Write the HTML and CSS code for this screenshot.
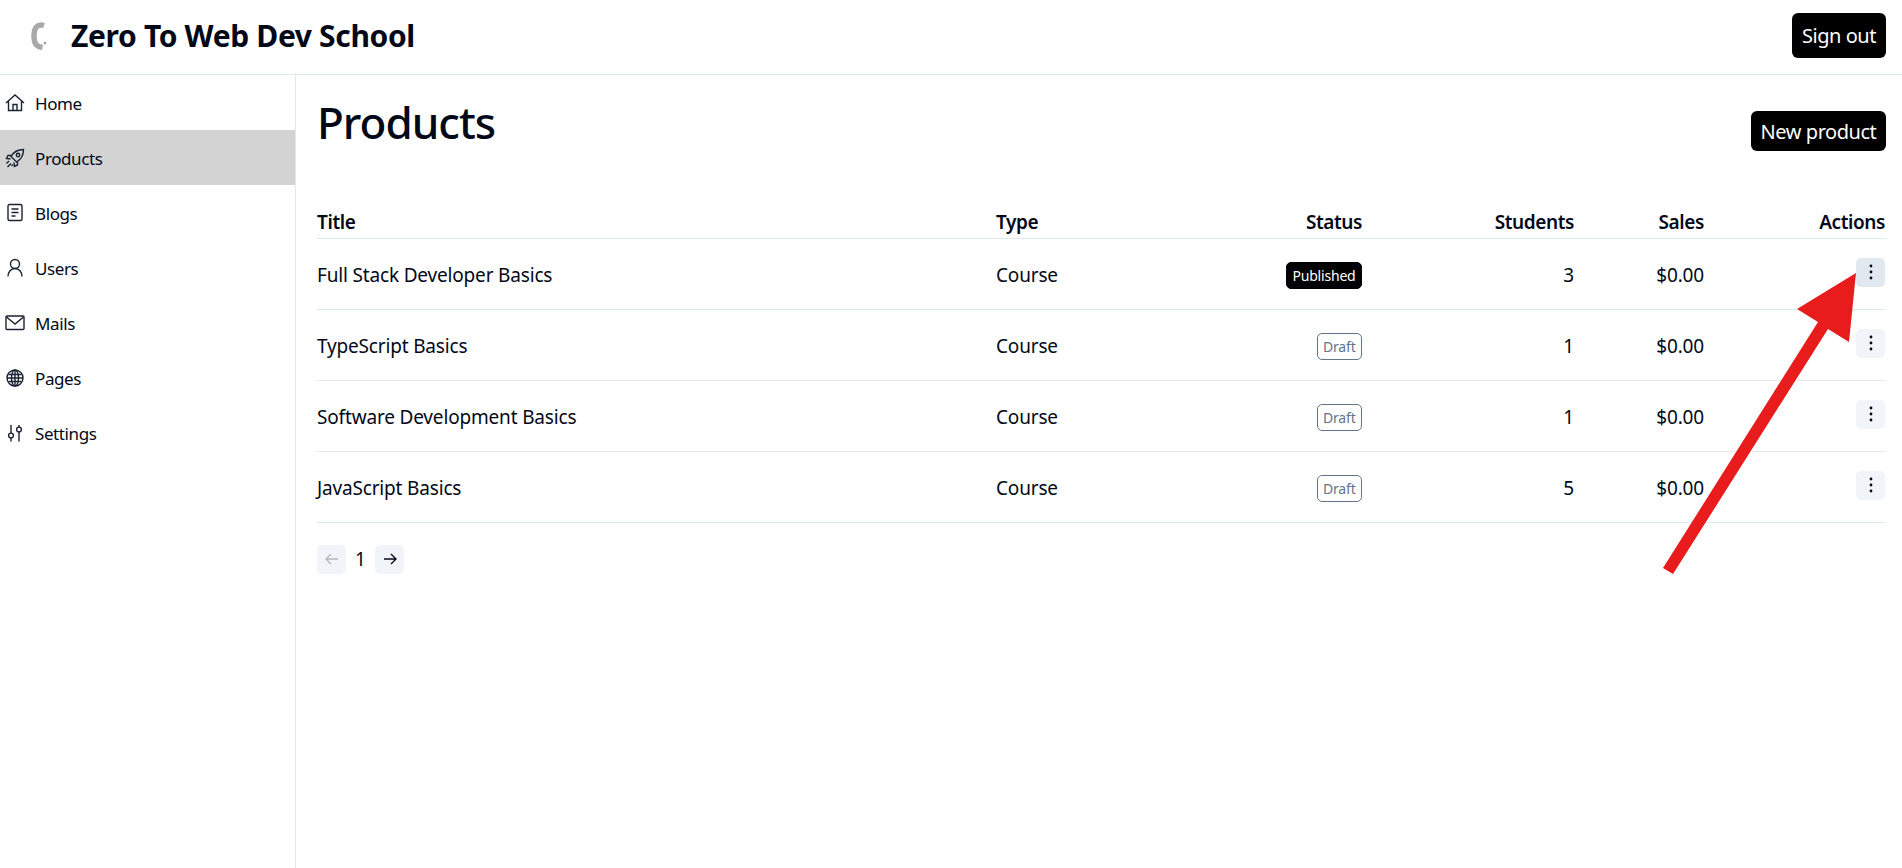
FILE: index.html
```html
<!DOCTYPE html>
<html lang="en">
<head>
    <meta charset="UTF-8">
    <meta name="viewport" content="width=device-width, initial-scale=1.0">
    <title>Products</title>
    <link rel="stylesheet" href="styles.css">
</head>
<body>
    <header class="topbar">
        <div class="brand">
            <svg class="logo" viewBox="0 0 18 28" width="18" height="28"><path d="M14 3.500C8 1.500 4 5 4 14s3 10.500 8.500 11.500" fill="none" stroke="#a9a9a9" stroke-width="5.500"/><circle cx="15" cy="21" r="1.500" fill="#a9a9a9"/></svg>
            <span class="brand-name">Zero To Web Dev School</span>
        </div>
        <button class="btn signout">Sign out</button>
    </header>

    <div class="layout">
        <nav class="sidebar">
            <a class="nav-item">
                <svg class="nav-icon" viewBox="0 0 20 20"><path d="M1 10 10 2l9 8M3.500 8v9.500h13V8M8 17.500v-6h4v6"/></svg>
                Home
            </a>
            <a class="nav-item active">
                <svg class="nav-icon" viewBox="0 0 20 20"><path d="M18.500 1.500C13 1.500 8.500 4 6 8.500l5.500 5.500c4.500-2.500 7-7 7-12.500z"/><circle cx="13" cy="7" r="1.700"/><path d="M6.500 7.500H3l-1.500 3 4 .5M12.500 13.500V17l-3 1.500-.5-4M4 13l-2.500 2.500M6 15.500 2.500 19M8 16.500 6.500 18"/></svg>
                Products
            </a>
            <a class="nav-item">
                <svg class="nav-icon" viewBox="0 0 20 20"><rect x="3" y="1.500" width="14" height="16" rx="1.500"/><path d="M6.500 6h7M6.500 9.500h7M6.500 13h4"/></svg>
                Blogs
            </a>
            <a class="nav-item">
                <svg class="nav-icon" viewBox="0 0 20 20"><circle cx="10" cy="6" r="4.500"/><path d="M3 18.500c0-4.500 3-8 7-8s7 3.500 7 8"/></svg>
                Users
            </a>
            <a class="nav-item">
                <svg class="nav-icon" viewBox="0 0 20 20"><rect x="1" y="3" width="18" height="13.500" rx="1"/><path d="M1.500 4 10 11l8.500-7"/></svg>
                Mails
            </a>
            <a class="nav-item">
                <svg class="nav-icon" viewBox="0 0 20 20"><circle cx="10" cy="10" r="8"/><ellipse cx="10" cy="10" rx="3.500" ry="8"/><path d="M10 2v16M2 10h16M3.500 6.500h13M3.500 13.500h13"/></svg>
                Pages
            </a>
            <a class="nav-item">
                <svg class="nav-icon" viewBox="0 0 20 20"><path d="M6 2v8M6 15v3.500M14 2v2M14 9v9.500"/><circle cx="6" cy="12.500" r="2.400"/><circle cx="14" cy="6.500" r="2.400"/></svg>
                Settings
            </a>
        </nav>

        <main class="content">
            <div class="page-head">
                <h1>Products</h1>
                <button class="btn new-product">New product</button>
            </div>

            <table class="products">
                <colgroup>
                    <col class="col-title"><col class="col-type"><col class="col-status"><col class="col-students"><col class="col-sales"><col>
                </colgroup>
                <thead>
                    <tr>
                        <th>Title</th>
                        <th>Type</th>
                        <th class="right">Status</th>
                        <th class="right">Students</th>
                        <th class="right">Sales</th>
                        <th class="right">Actions</th>
                    </tr>
                </thead>
                <tbody>
                    <tr>
                        <td>Full Stack Developer Basics</td>
                        <td>Course</td>
                        <td class="right"><span class="badge published">Published</span></td>
                        <td class="right">3</td>
                        <td class="right">$0.00</td>
                        <td class="right"><button class="kebab hovered"><svg viewBox="0 0 16 16"><circle cx="8" cy="2" r="1.400"/><circle cx="8" cy="8" r="1.400"/><circle cx="8" cy="14" r="1.400"/></svg></button></td>
                    </tr>
                    <tr>
                        <td>TypeScript Basics</td>
                        <td>Course</td>
                        <td class="right"><span class="badge draft">Draft</span></td>
                        <td class="right">1</td>
                        <td class="right">$0.00</td>
                        <td class="right"><button class="kebab"><svg viewBox="0 0 16 16"><circle cx="8" cy="2" r="1.400"/><circle cx="8" cy="8" r="1.400"/><circle cx="8" cy="14" r="1.400"/></svg></button></td>
                    </tr>
                    <tr>
                        <td>Software Development Basics</td>
                        <td>Course</td>
                        <td class="right"><span class="badge draft">Draft</span></td>
                        <td class="right">1</td>
                        <td class="right">$0.00</td>
                        <td class="right"><button class="kebab"><svg viewBox="0 0 16 16"><circle cx="8" cy="2" r="1.400"/><circle cx="8" cy="8" r="1.400"/><circle cx="8" cy="14" r="1.400"/></svg></button></td>
                    </tr>
                    <tr>
                        <td>JavaScript Basics</td>
                        <td>Course</td>
                        <td class="right"><span class="badge draft">Draft</span></td>
                        <td class="right">5</td>
                        <td class="right">$0.00</td>
                        <td class="right"><button class="kebab"><svg viewBox="0 0 16 16"><circle cx="8" cy="2" r="1.400"/><circle cx="8" cy="8" r="1.400"/><circle cx="8" cy="14" r="1.400"/></svg></button></td>
                    </tr>
                </tbody>
            </table>

            <div class="pager">
                <button class="page-btn disabled"><svg viewBox="0 0 16 16"><path d="M14 8H2M7 3 2 8l5 5"/></svg></button>
                <span class="page-num">1</span>
                <button class="page-btn"><svg viewBox="0 0 16 16"><path d="M2 8h12M9 3l5 5-5 5"/></svg></button>
            </div>
        </main>
    </div>

    <!-- annotation drawn over the screenshot -->
    <svg class="arrow" width="1902" height="868" viewBox="0 0 1902 868"><polygon points="1856,273 1849,342 1828,329 1673,574 1663,568 1818,322 1797,309" fill="#e81c1c"/></svg>
</body>
</html>
```

FILE: styles.css
```css
* {
    box-sizing: border-box;
}
html, body {
    height: 100%;
}
body {
    margin: 0;
    font-family: "Noto Sans", Arial, sans-serif;
    font-size: 19px;
    color: #020817;
    background: #fff;
    overflow: hidden;
}
.topbar {
    height: 75px;
    display: flex;
    align-items: center;
    justify-content: space-between;
    padding: 0 16px 3px 30px;
    border-bottom: 1px solid #e2e8f0;
}
.brand {
    display: flex;
    align-items: center;
    gap: 23px;
}
.brand-name {
    font-size: 30px;
    font-weight: 700;
    letter-spacing: -0.35px;
}
.btn {
    background: #000;
    color: #fff;
    border: none;
    border-radius: 6px;
    font-family: inherit;
    font-size: 20px;
    letter-spacing: -0.45px;
}
.signout {
    height: 45px;
    width: 94px;
}
.new-product {
    height: 40px;
    width: 135px;
}
.layout {
    display: flex;
    height: calc(100% - 75px);
}
.sidebar {
    width: 296px;
    flex-shrink: 0;
    border-right: 1px solid #e2e8f0;
}
.nav-item {
    display: flex;
    align-items: center;
    gap: 10px;
    height: 55px;
    padding: 1px 0 0 5px;
    font-size: 17px;
    letter-spacing: -0.4px;
}
.active {
    background: #d3d3d3;
}
.nav-icon {
    width: 20px;
    height: 20px;
    fill: none;
    stroke: #1a2233;
    stroke-width: 1.4;
    flex-shrink: 0;
}
.content {
    flex: 1;
    padding: 0 16px 0 21px;
}
.page-head {
    display: flex;
    justify-content: space-between;
    align-items: flex-start;
    height: 127px;
}
h1 {
    margin: 17px 0 0;
    font-size: 44px;
    font-weight: 500;
    line-height: 60px;
    letter-spacing: -1px;
}
.new-product {
    margin-top: 36px;
}
.products {
    width: 100%;
    table-layout: fixed;
    border-collapse: collapse;
}
.col-title {
    width: 679px;
}
.col-type {
    width: 198px;
}
.col-status {
    width: 169px;
}
.col-students {
    width: 212px;
}
.col-sales {
    width: 130px;
}
th, td {
    padding: 0 1px 0 0;
    text-align: left;
    border-bottom: 1px solid #e2e8f0;
    letter-spacing: -0.17px;
}
th {
    height: 36px;
    padding-top: 4px;
    font-weight: 600;
    letter-spacing: -0.4px;
}
td {
    height: 71px;
    padding-top: 2px;
}
th.right, td.right {
    text-align: right;
}
.badge {
    display: inline-block;
    height: 27px;
    margin-top: 2px;
    padding: 0 5.5px;
    border-radius: 5px;
    font-size: 14px;
    line-height: 25px;
    letter-spacing: -0.2px;
    vertical-align: middle;
}
.published {
    background: #000;
    color: #fff;
    border: 1px solid #000;
}
.draft {
    color: #64748b;
    border: 1px solid #64748b;
}
.kebab {
    display: inline-flex;
    align-items: center;
    justify-content: center;
    width: 29px;
    height: 29px;
    margin: 0 0 5px;
    padding: 0;
    border: none;
    border-radius: 5px;
    background: #f1f5f9;
    vertical-align: middle;
}
.kebab.hovered {
    background: #e2e8f0;
}
.kebab svg {
    width: 16px;
    height: 16px;
    fill: #020817;
}
.pager {
    display: flex;
    align-items: center;
    margin-top: 22px;
}
.page-btn {
    display: flex;
    align-items: center;
    justify-content: center;
    width: 29px;
    height: 29px;
    padding: 0;
    border: none;
    border-radius: 5px;
    background: #f1f5f9;
}
.page-btn svg {
    width: 16px;
    height: 16px;
    fill: none;
    stroke: #020817;
    stroke-width: 1.3;
}
.page-btn.disabled svg {
    opacity: 0.25;
}
.page-num {
    width: 29px;
    text-align: center;
}
.arrow {
    position: absolute;
    top: 0;
    left: 0;
    pointer-events: none;
}
```
